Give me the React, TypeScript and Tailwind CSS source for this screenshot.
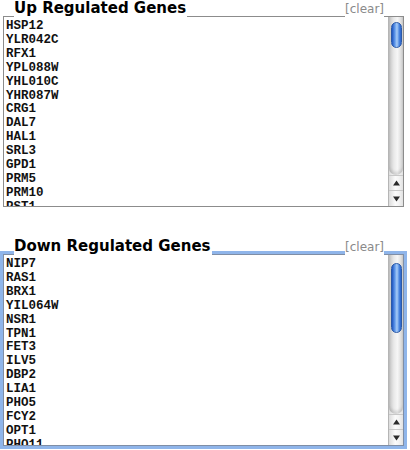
import React from 'react'

const upGenes = ['HSP12', 'YLR042C', 'RFX1', 'YPL088W', 'YHL010C', 'YHR087W', 'CRG1', 'DAL7', 'HAL1', 'SRL3', 'GPD1', 'PRM5', 'PRM10', 'PST1', 'GRE2']
const downGenes = ['NIP7', 'RAS1', 'BRX1', 'YIL064W', 'NSR1', 'TPN1', 'FET3', 'ILV5', 'DBP2', 'LIA1', 'PHO5', 'FCY2', 'OPT1', 'PHO11', 'ERG3']

function Arrow({ up }: { up?: boolean }) {
  return (
    <svg width="7" height="6" viewBox="0 0 7 6">
      <path d={up ? 'M3.5 0.5 L7 5.5 L0 5.5 Z' : 'M0 0.5 L7 0.5 L3.5 5.5 Z'} fill="#2a2a2a" />
    </svg>
  )
}

function Scrollbar({ thumbClass, capClass }: { thumbClass: string; capClass: string }) {
  return (
    <div className="flex w-[15px] flex-col border-l border-[#b5b5b5] bg-[linear-gradient(to_right,#dcdcdc,#fbfbfb_45%,#f4f4f4_70%,#e2e2e2)]">
      <div className="flex flex-1 flex-col items-center rounded-b-[7px] bg-[linear-gradient(to_right,#c4c4c4,#e9e9e9_35%,#f6f6f6_60%,#d2d2d2)] shadow-[inset_0_-3px_3px_rgba(0,0,0,0.12)]">
        <div className={capClass} />
        <div className={'w-[11px] rounded-full border border-[#2b5aa8] bg-[linear-gradient(to_right,#1f55c0,#5b94e8_30%,#a9cdf7_55%,#4b86e0_80%,#2a62c8)] ' + thumbClass} />
      </div>
      <div className="flex h-[15px] items-center justify-center border-t border-[#c8c8c8]">
        <Arrow up />
      </div>
      <div className="flex h-[16px] items-center justify-center border-t border-[#c8c8c8]">
        <Arrow />
      </div>
    </div>
  )
}

function GeneBox({ title, genes, focused, boxClass, thumbClass, capClass }: {
  title: string; genes: string[]; focused?: boolean; boxClass: string; thumbClass: string; capClass: string
}) {
  return (
    <div className="flex w-[401px] flex-col">
      <div className="relative z-10 -mb-px flex h-[17px] items-end pl-[11px] pr-[20px]">
        <span className="bg-white pr-[1px] font-['DejaVu_Sans',sans-serif] text-[15px] leading-[17px] font-bold text-black">{title}</span>
        <div className="flex-1" />
        <span className="bg-white font-['DejaVu_Sans',sans-serif] text-[12px] leading-[15px] text-[#8a8a8a]">[clear]</span>
      </div>
      <div className={'flex border bg-white ' + (focused ? 'border-[#7f8ea6] ring-[3px] ring-[#8fb5ea] ' : 'border-[#8c8c8c] ') + boxClass}>
        <div className="flex-1 overflow-hidden pt-[3px] pl-[2px]">
          {genes.map((g) => (
            <div key={g} className="font-['Liberation_Mono',monospace] text-[12.5px] leading-[13.9px] font-bold text-[#111]">{g}</div>
          ))}
        </div>
        <Scrollbar thumbClass={thumbClass} capClass={capClass} />
      </div>
    </div>
  )
}

export default function App() {
  return (
    <div className="h-[450px] w-[410px] overflow-hidden bg-white pl-[3px]">
      <GeneBox title="Up Regulated Genes" genes={upGenes} boxClass="h-[191px]" capClass="h-[5px]" thumbClass="h-[26px]" />
      <div className="mt-[31px]">
        <GeneBox title="Down Regulated Genes" genes={downGenes} focused boxClass="h-[192px]" capClass="h-[8px]" thumbClass="h-[70px]" />
      </div>
    </div>
  )
}
